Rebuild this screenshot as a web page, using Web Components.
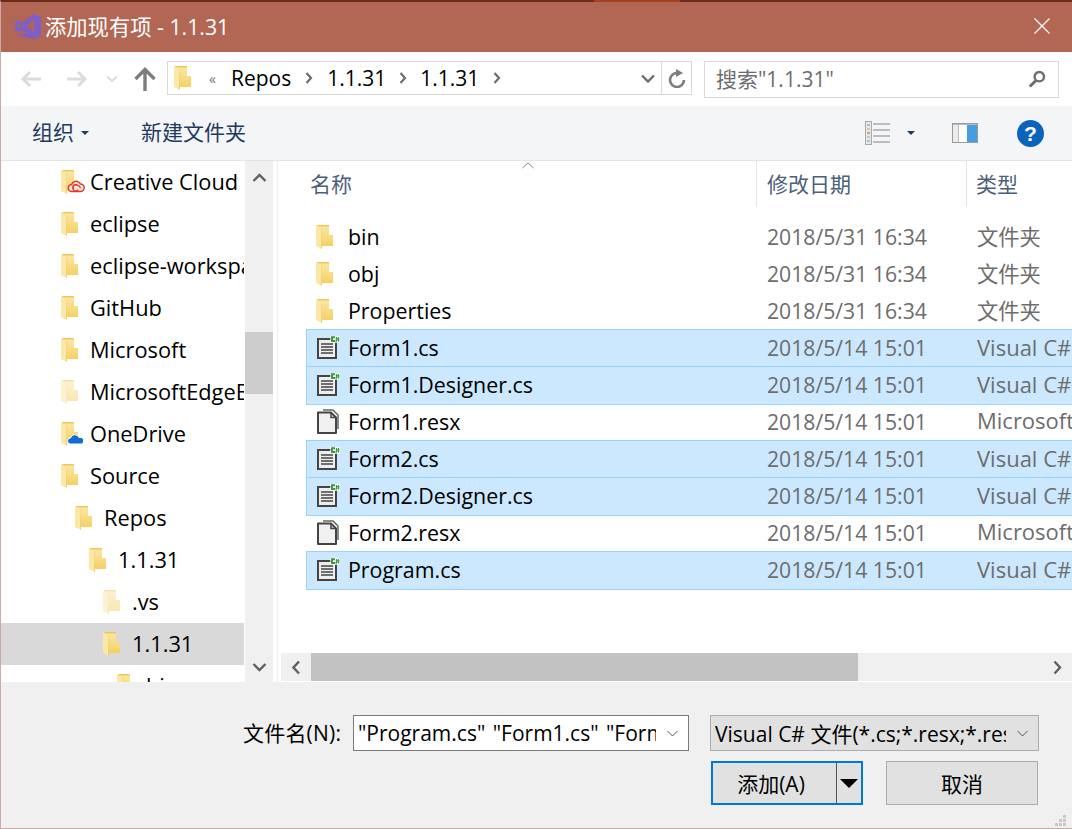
<!doctype html>
<html>
<head>
<meta charset="utf-8">
<title>添加现有项</title>
<style>
  html, body { margin: 0; padding: 0; background: #f0f0f0; }
  body {
    font-family: "Open Sans", "Noto Sans CJK SC", sans-serif;
    font-size: 21px;
    color: #000;
    overflow: hidden;
  }
</style>
</head>
<body>
<add-dialog>
  <title-bar slot="top">添加现有项 - 1.1.31</title-bar>
  <nav-bar slot="top"></nav-bar>
  <command-bar slot="top"></command-bar>

  <tree-pane slot="left">
    <tree-row level="0" icon="cc">Creative Cloud</tree-row>
    <tree-row level="0">eclipse</tree-row>
    <tree-row level="0">eclipse-workspace</tree-row>
    <tree-row level="0">GitHub</tree-row>
    <tree-row level="0">Microsoft</tree-row>
    <tree-row level="0" faded>MicrosoftEdgeBackups</tree-row>
    <tree-row level="0" icon="onedrive">OneDrive</tree-row>
    <tree-row level="0">Source</tree-row>
    <tree-row level="1">Repos</tree-row>
    <tree-row level="2">1.1.31</tree-row>
    <tree-row level="3" faded>.vs</tree-row>
    <tree-row level="3" current>1.1.31</tree-row>
    <tree-row level="4">bin</tree-row>
  </tree-pane>

  <file-pane slot="right">
    <file-row kind="folder" date="2018/5/31 16:34" type="文件夹">bin</file-row>
    <file-row kind="folder" date="2018/5/31 16:34" type="文件夹">obj</file-row>
    <file-row kind="folder" date="2018/5/31 16:34" type="文件夹">Properties</file-row>
    <file-row kind="cs" selected date="2018/5/14 15:01" type="Visual C# 源文件">Form1.cs</file-row>
    <file-row kind="cs" selected date="2018/5/14 15:01" type="Visual C# 源文件">Form1.Designer.cs</file-row>
    <file-row kind="doc" date="2018/5/14 15:01" type="Microsoft .NET">Form1.resx</file-row>
    <file-row kind="cs" selected date="2018/5/14 15:01" type="Visual C# 源文件">Form2.cs</file-row>
    <file-row kind="cs" selected date="2018/5/14 15:01" type="Visual C# 源文件">Form2.Designer.cs</file-row>
    <file-row kind="doc" date="2018/5/14 15:01" type="Microsoft .NET">Form2.resx</file-row>
    <file-row kind="cs" selected date="2018/5/14 15:01" type="Visual C# 源文件">Program.cs</file-row>
  </file-pane>

  <footer-bar slot="bottom"></footer-bar>
</add-dialog>

<script>
const FOLDER_SVG = /*html*/ `
  <svg width="17" height="24" viewBox="0 0 17 24">
    <defs>
      <linearGradient id="fg" x1="0" y1="0" x2="0" y2="1">
        <stop offset="0" stop-color="#fbe8a8"/>
        <stop offset="1" stop-color="#f5d165"/>
      </linearGradient>
    </defs>
    <path d="M1 0h12v10h4v11H5z" fill="url(#fg)"/>
    <path d="M1 0h12v1.500H1z" fill="#efc75a"/>
    <path d="M0 .5l6 2.500V24L0 21z" fill="#fbe7a6"/>
    <path d="M5.500 2.800L6 24l-1-.4V2.500z" fill="#f1cf6d"/>
  </svg>`;

const CS_SVG = /*html*/ `
  <svg width="24" height="24" viewBox="0 0 24 24">
    <path d="M2 3h14v2h4v17H2z" fill="#eeeeee" stroke="#444" stroke-width="2"/>
    <path d="M5 8h12M5 11h12M5 14h12M5 17h12" stroke="#444" stroke-width="1.500"/>
    <rect x="14" y="0" width="10" height="7" fill="#fff" opacity=".7"/>
    <path d="M19 1.300h-3v3.700h3" fill="none" stroke="#3e9c34" stroke-width="2"/>
    <path d="M20.500 1v4.500M22.500 1v4.500M19.800 2.400h3.600M19.800 4h3.600" stroke="#3e9c34" stroke-width="1"/>
  </svg>`;

const DOC_SVG = /*html*/ `
  <svg width="24" height="26" viewBox="0 0 24 26">
    <path d="M2 3.500h13l5 5V24H2z" fill="#f0f0f0" stroke="#444" stroke-width="2" stroke-linejoin="round"/>
    <path d="M7 1h10l5 5v14" fill="none" stroke="#666" stroke-width="1.500"/>
    <path d="M15 3.500v5h5" fill="none" stroke="#444" stroke-width="1.500"/>
  </svg>`;

class AddDialog extends HTMLElement {
  constructor() {
    super();
    this.attachShadow({ mode: 'open' }).innerHTML = /*html*/ `
      <style>
        :host {
          display: flex;
          flex-direction: column;
          box-sizing: border-box;
          position: relative;
          width: 1072px;
          height: 829px;
          border-top: 2px solid #6b2c1c;
          border-left: 1px solid #c9aca5;
          border-bottom: 1px solid #c9aca5;
          background: #f0f0f0;
        }
        .accent { position: absolute; left: 593px; top: -2px; width: 86px; height: 2px; background: #a6401f; }
        .main { display: flex; height: 521px; background: #fff; }
      </style>
      <div class="accent"></div>
      <slot name="top"></slot>
      <div class="main">
        <slot name="left"></slot>
        <slot name="right"></slot>
      </div>
      <slot name="bottom"></slot>
    `;
  }
}

class TitleBar extends HTMLElement {
  constructor() {
    super();
    this.attachShadow({ mode: 'open' }).innerHTML = /*html*/ `
      <style>
        :host {
          display: flex;
          align-items: center;
          height: 50px;
          background: #b26754;
          color: #fff;
          font-size: 21.3px;
          padding: 0 22px 0 13px;
        }
        svg.logo { margin-right: 3px; flex: none; }
        .text { flex: 1; white-space: nowrap; margin-bottom: 4px; }
        svg.close { margin-bottom: 2px; }
      </style>
      <svg class="logo" width="28" height="28" viewBox="0 0 28 28">
        <path d="M20 1l7 3v19l-7 3-18-4 11-1.500-1-.5L8 17l-3 2.500L1 17V9l4-2 3 2.500L20 1zM20 6.500L12.500 13 20 19zM4 10.500v5L6.500 13zM9.500 10.500L9 15.500l1.800-2.500z" fill="#7e5fc4" fill-rule="evenodd"/>
      </svg>
      <div class="text"><slot></slot></div>
      <svg class="close" width="16" height="16" viewBox="0 0 16 16"><path d="M.5.500l15 15M15.500.500l-15 15" stroke="#fff" stroke-width="1.200"/></svg>
    `;
  }
}

class NavBar extends HTMLElement {
  constructor() {
    super();
    this.attachShadow({ mode: 'open' }).innerHTML = /*html*/ `
      <style>
        :host {
          display: flex;
          align-items: center;
          height: 54px;
          background: #fff;
          padding: 0 12px 0 19px;
          box-sizing: border-box;
          font-size: 21px;
        }
        svg { flex: none; display: block; }
        .nav { display: flex; align-items: center; width: 147px; flex: none; }
        .addr {
          display: flex;
          align-items: center;
          box-sizing: border-box;
          width: 525px;
          height: 34px;
          flex: none;
          border: 1px solid #d9d9d9;
          padding-left: 6px;
          margin-bottom: 2px;
          white-space: nowrap;
        }
        .laquo { color: #777; font-size: 14px; margin: 0 11px 0 18px; width: 11px; }
        .grow { flex: 1; }
        .drop { width: 26px; display: flex; justify-content: center; flex: none; }
        .refresh { width: 30px; height: 32px; border-left: 1px solid #d9d9d9; display: flex; align-items: center; justify-content: center; box-sizing: border-box; flex: none; }
        .search {
          display: flex;
          align-items: center;
          justify-content: space-between;
          box-sizing: border-box;
          width: 355px;
          height: 37px;
          margin-left: 12px;
          flex: none;
          border: 1px solid #d9d9d9;
          padding: 0 12px 0 11px;
          color: #6d6d6d;
        }
        .search span { margin-bottom: 3px; }
      </style>
      <div class="nav">
        <svg width="22" height="18" viewBox="0 0 22 18"><path d="M21 9H2.500M10 2L3 9l7 7" fill="none" stroke="#dcdcdc" stroke-width="3"/></svg>
        <svg style="margin-left:24px" width="22" height="18" viewBox="0 0 22 18"><path d="M1 9h18.500M12 2l7 7-7 7" fill="none" stroke="#dcdcdc" stroke-width="3"/></svg>
        <svg style="margin-left:18px" width="12" height="8" viewBox="0 0 12 8"><path d="M1 1.500l5 4.500 5-4.500" fill="none" stroke="#dcdcdc" stroke-width="2"/></svg>
        <svg style="margin-left:16px" width="22" height="24" viewBox="0 0 22 24"><path d="M11 24V3M1.500 12L11 2.500l9.500 9.500" fill="none" stroke="#7d7d7d" stroke-width="3.400"/></svg>
      </div>
      <div class="addr">
        <span>${FOLDER_SVG}</span>
        <span class="laquo">«</span>
        <span>Repos</span><chevron-sep></chevron-sep>
        <span>1.1.31</span><chevron-sep style="width:34px"></chevron-sep>
        <span>1.1.31</span><chevron-sep></chevron-sep>
        <span class="grow"></span>
        <div class="drop"><svg width="14" height="9" viewBox="0 0 14 9"><path d="M1 1.500l6 6 6-6" fill="none" stroke="#6d6d6d" stroke-width="2.400"/></svg></div>
        <div class="refresh"><svg width="18" height="19" viewBox="0 0 18 19"><path d="M16 11a7 7 0 1 1-7-7" fill="none" stroke="#7d7d7d" stroke-width="2.600"/><path d="M8 0l7 4-7 4z" fill="#7d7d7d"/></svg></div>
      </div>
      <div class="search">
        <span>搜索"1.1.31"</span>
        <svg width="18" height="18" viewBox="0 0 18 18"><circle cx="11.300" cy="6.700" r="4.700" fill="none" stroke="#6d6d6d" stroke-width="2.400"/><path d="M8 10.500L1.800 16.500" stroke="#6d6d6d" stroke-width="3"/></svg>
      </div>
    `;
  }
}

class ChevronSep extends HTMLElement {
  constructor() {
    super();
    this.attachShadow({ mode: 'open' }).innerHTML = /*html*/ `
      <style>:host { display: flex; align-items: center; justify-content: center; width: 36px; flex: none; }</style>
      <svg width="8" height="12" viewBox="0 0 8 12"><path d="M1.500 1l4.500 5-4.500 5" fill="none" stroke="#6d6d6d" stroke-width="2.200"/></svg>
    `;
  }
}

class CommandBar extends HTMLElement {
  constructor() {
    super();
    this.attachShadow({ mode: 'open' }).innerHTML = /*html*/ `
      <style>
        :host {
          display: flex;
          align-items: center;
          box-sizing: border-box;
          height: 55px;
          background: #f4f5f7;
          border-bottom: 1px solid #e4e4e4;
          padding: 0 28px 0 31px;
          color: #1e3a5f;
          font-size: 21px;
        }
        .t { margin-bottom: 4px; }
        .caret { width: 0; height: 0; border: 4px solid transparent; border-top: 4px solid #1e3a5f; border-bottom: 0; }
        .new { margin-left: 52px; }
        .grow { flex: 1; }
        svg { display: block; flex: none; }
        .help { width: 27px; height: 27px; border-radius: 50%; background: #0a64bc; color: #fff; font: bold 21px/27px "Liberation Sans", sans-serif; text-align: center; }
      </style>
      <span class="t">组织</span>
      <span class="caret" style="margin-left:7px"></span>
      <span class="new t">新建文件夹</span>
      <span class="grow"></span>
      <svg width="25" height="24" viewBox="0 0 25 24">
        <rect x=".500" y=".500" width="6" height="23" fill="#e8e8e8" stroke="#aaa"/>
        <path d="M2 4h3" stroke="#6aa0c8"/><path d="M2 8h3" stroke="#a8b84a"/><path d="M2 12h3" stroke="#c8513a"/><path d="M2 16h3" stroke="#9aa"/><path d="M2 20h3" stroke="#6aa0c8"/>
        <path d="M8 3h17M8 9h17M8 15h17M8 21h17" stroke="#aaa" stroke-width="1.300"/>
      </svg>
      <span class="caret" style="margin-left:17px"></span>
      <svg style="margin-left:37px" width="26" height="20" viewBox="0 0 26 20">
        <rect x=".500" y=".500" width="25" height="19" fill="#fff" stroke="#9a9a9a"/>
        <rect x="15" y="2" width="10" height="17" fill="#459de2"/>
        <rect x="1" y="1" width="5" height="18" fill="#ececec"/>
        <path d="M6.500 1v18M1 1.500h24" stroke="#bbb"/>
      </svg>
      <span class="help" style="margin-left:39px">?</span>
    `;
  }
}

class TreePane extends HTMLElement {
  constructor() {
    super();
    this.attachShadow({ mode: 'open' }).innerHTML = /*html*/ `
      <style>
        :host { display: flex; width: 280px; height: 521px; flex: none; overflow: hidden; background: #fff; }
        .list { width: 243px; height: 521px; margin-right: 1px; overflow: hidden; flex: none; }
        .gap { flex: none; box-sizing: border-box; border-right: 1px solid #efefef; margin-right: 3px; width: 5px; }
      </style>
      <div class="list"><slot></slot></div>
      <scroll-bar dir="v"></scroll-bar>
      <div class="gap"></div>
    `;
  }
}

class TreeRow extends HTMLElement {
  constructor() {
    super();
    const level = Number(this.getAttribute('level') || 0);
    const icon = this.getAttribute('icon');
    let badge = '';
    if (icon === 'cc') {
      badge = /*html*/ `<svg class="badge" style="left:6px;top:9px" width="18" height="14" viewBox="0 0 18 14">
        <path d="M5 12.500a3.500 3.500 0 0 1-.5-7A5 5 0 0 1 13.500 5a3.700 3.700 0 0 1 0 7.500z" fill="#fbe7dc" stroke="#e5352a" stroke-width="1.400"/>
        <path d="M11.500 7a3.200 3.200 0 1 0 0 3.500M7 10a2.200 2.200 0 0 1 3-3.500M13.500 9a5 5 0 0 0-8-2" fill="none" stroke="#e5352a" stroke-width="1.200"/></svg>`;
    } else if (icon === 'onedrive') {
      badge = /*html*/ `<svg class="badge" style="left:6px;top:11px" width="18" height="12" viewBox="0 0 18 12">
        <path d="M3.500 11a3 3 0 0 1 0-6A4.500 4.500 0 0 1 12 4.500 3.300 3.300 0 0 1 14.500 11z" fill="#0f6fd0" stroke="#fff"/></svg>`;
    }
    this.attachShadow({ mode: 'open' }).innerHTML = /*html*/ `
      <style>
        :host {
          display: flex;
          align-items: center;
          height: 42px;
          box-sizing: border-box;
          white-space: nowrap;
          overflow: hidden;
          padding-left: ${60 + level * 14}px;
          font-size: 21.8px;
        }
        :host([current]) { background: #d9d9d9; }
        .icon { position: relative; width: 17px; height: 24px; flex: none; margin-right: 12px; }
        :host([faded]) .icon svg:first-child { opacity: .5; }
        .badge { position: absolute; }
        .label { margin-bottom: 2px; }
      </style>
      <span class="icon">${FOLDER_SVG}${badge}</span>
      <span class="label"><slot></slot></span>
    `;
  }
}

class ScrollBar extends HTMLElement {
  constructor() {
    super();
    const vertical = this.getAttribute('dir') === 'v';
    const up = vertical ? 'M1.500 8l6-6 6 6' : 'M7 1.500l-5.500 6 5.500 6';
    const down = vertical ? 'M1.500 2l6 6 6-6' : 'M1.500 1.500l5.500 6-5.500 6';
    const size = vertical ? 'width="15" height="10" viewBox="0 0 15 10"' : 'width="9" height="15" viewBox="0 0 9 15"';
    this.attachShadow({ mode: 'open' }).innerHTML = /*html*/ `
      <style>
        :host { display: flex; background: #f0f0f0; flex: none; }
        :host([dir="v"]) { flex-direction: column; width: 28px; height: 521px; }
        :host([dir="h"]) { flex-direction: row; height: 28px; margin-bottom: 1px; }
        .btn { display: flex; align-items: center; justify-content: center; flex: none; }
        :host([dir="v"]) .btn.first { height: 33px; }
        :host([dir="v"]) .btn.last { height: 30px; }
        :host([dir="h"]) .btn { width: 30px; }
        .track { flex: 1; display: flex; min-width: 0; }
        :host([dir="v"]) .track { flex-direction: column; padding-top: 138px; }
        .thumb { background: #cdcdcd; flex: none; }
        :host([dir="v"]) .thumb { height: 62px; }
        :host([dir="h"]) .thumb { width: 547px; height: 28px; background: #c2c2c2; }
      </style>
      <div class="btn first"><svg ${size}><path d="${up}" fill="none" stroke="#606060" stroke-width="2.400"/></svg></div>
      <div class="track"><div class="thumb"></div></div>
      <div class="btn last"><svg ${size}><path d="${down}" fill="none" stroke="#606060" stroke-width="2.400"/></svg></div>
    `;
  }
}

class FilePane extends HTMLElement {
  constructor() {
    super();
    this.attachShadow({ mode: 'open' }).innerHTML = /*html*/ `
      <style>
        :host { display: flex; flex-direction: column; flex: 1; min-width: 0; height: 521px; overflow: hidden; font-size: 21px; }
        .head { position: relative; display: flex; height: 46px; flex: none; color: #4c607a; }
        .head div { display: flex; align-items: center; box-sizing: border-box; white-space: nowrap; padding-bottom: 2px; }
        .name { width: 476px; padding-left: 29px; border-right: 1px solid #e5e5e5; }
        .date { width: 210px; padding-left: 10px; border-right: 1px solid #e5e5e5; }
        .type { padding-left: 9px; }
        .sort { position: absolute; left: 241px; top: 1px; }
        .body { flex: 1; padding-top: 11px; padding-left: 25px; overflow: hidden; width: 791px; box-sizing: border-box; }
      </style>
      <div class="head">
        <div class="name">名称</div>
        <div class="date">修改日期</div>
        <div class="type">类型</div>
        <svg class="sort" width="12" height="7" viewBox="0 0 12 7"><path d="M.5 6L6 1l5.500 5" fill="none" stroke="#8a8a8a"/></svg>
      </div>
      <div class="body"><slot></slot></div>
      <scroll-bar dir="h"></scroll-bar>
    `;
  }
}

class FileRow extends HTMLElement {
  constructor() {
    super();
    const kind = this.getAttribute('kind');
    const icon = kind === 'folder' ? FOLDER_SVG : kind === 'cs' ? CS_SVG : DOC_SVG;
    this.attachShadow({ mode: 'open' }).innerHTML = /*html*/ `
      <style>
        :host {
          display: flex;
          align-items: center;
          box-sizing: border-box;
          height: 37px;
          white-space: nowrap;
          overflow: hidden;
          color: #000;
          border: 1px solid transparent;
          border-right: 0;
        }
        :host([selected]) {
          height: 39px;
          margin-bottom: -2px;
          padding-bottom: 2px;
          background: #cce8ff;
          border-color: #99d1ff;
        }
        .icon { width: 41px; flex: none; display: flex; justify-content: center; box-sizing: border-box; }
        :host([kind="folder"]) .icon { padding-right: 6px; }
        .label { width: 419px; flex: none; font-size: 21.4px; }
        .date { width: 210px; flex: none; color: #6d6d6d; font-size: 21.2px; }
        .type { flex: none; color: #6d6d6d; font-size: 22px; margin-bottom: 4px; }
        :host([kind="folder"]) .type { font-size: 21.3px; margin-bottom: 2px; }
      </style>
      <span class="icon">${icon}</span>
      <span class="label"><slot></slot></span>
      <span class="date">${this.getAttribute('date')}</span>
      <span class="type">${this.getAttribute('type')}</span>
    `;
  }
}

class FooterBar extends HTMLElement {
  constructor() {
    super();
    this.attachShadow({ mode: 'open' }).innerHTML = /*html*/ `
      <style>
        :host {
          display: flex;
          flex-direction: column;
          position: relative;
          flex: 1;
          background: #f0f0f0;
          padding: 33px 34px 0 242px;
          font-size: 21px;
        }
        .row { display: flex; align-items: center; }
        .row.actions { justify-content: flex-end; margin-top: 10px; }
        .lbl { width: 110px; flex: none; white-space: nowrap; margin-bottom: 2px; letter-spacing: .2px; }
        .input, .filter {
          display: flex;
          align-items: center;
          box-sizing: border-box;
          height: 36px;
          border: 1px solid #7a7a7a;
          background: #fff;
          white-space: nowrap;
          overflow: hidden;
          flex: none;
          padding-left: 4px;
        }
        .input { width: 336px; }
        .input .clip { word-spacing: 2px; }
        .filter { width: 329px; margin-left: 21px; background: #e1e1e1; border-color: #adadad; }
        .clip { flex: 1; overflow: hidden; min-width: 0; }
        .arrow { width: 32px; flex: none; display: flex; justify-content: center; }
        .btn {
          display: flex;
          align-items: center;
          justify-content: center;
          box-sizing: border-box;
          height: 44px;
          background: #e1e1e1;
          border: 1px solid #adadad;
        }
        .ok { width: 152px; border: 2px solid #0078d7; }
        .ok .cap { flex: 1; text-align: center; padding-right: 7px; }
        .ok .split { width: 25px; height: 40px; border-left: 1px solid #555; display: flex; align-items: center; justify-content: center; box-sizing: border-box; flex: none; }
        .cancel { width: 152px; margin-left: 23px; }
        .grip { position: absolute; right: 6px; bottom: 2px; }
      </style>
      <div class="row">
        <span class="lbl">文件名(N):</span>
        <div class="input">
          <span class="clip">"Program.cs" "Form1.cs" "Form2.cs"</span>
          <span class="arrow"><svg width="11" height="7" viewBox="0 0 11 7"><path d="M.5 1l5 5 5-5" fill="none" stroke="#555"/></svg></span>
        </div>
        <div class="filter">
          <span class="clip">Visual C# 文件(*.cs;*.resx;*.resw)</span>
          <span class="arrow"><svg width="11" height="7" viewBox="0 0 11 7"><path d="M.5 1l5 5 5-5" fill="none" stroke="#555"/></svg></span>
        </div>
      </div>
      <div class="row actions">
        <div class="btn ok">
          <span class="cap">添加(A)</span>
          <span class="split"><svg width="18" height="9" viewBox="0 0 18 9"><path d="M0 0h18L9 9z" fill="#000"/></svg></span>
        </div>
        <div class="btn cancel">取消</div>
      </div>
      <svg class="grip" width="11" height="11" viewBox="0 0 11 11"><path d="M8 0h3v3H8zM4 4h3v3H4zM8 4h3v3H8zM0 8h3v3H0zM4 8h3v3H4zM8 8h3v3H8z" fill="#c8c8c8"/></svg>
    `;
  }
}

customElements.define('add-dialog', AddDialog);
customElements.define('title-bar', TitleBar);
customElements.define('chevron-sep', ChevronSep);
customElements.define('nav-bar', NavBar);
customElements.define('command-bar', CommandBar);
customElements.define('scroll-bar', ScrollBar);
customElements.define('tree-pane', TreePane);
customElements.define('tree-row', TreeRow);
customElements.define('file-pane', FilePane);
customElements.define('file-row', FileRow);
customElements.define('footer-bar', FooterBar);
</script>
</body>
</html>
